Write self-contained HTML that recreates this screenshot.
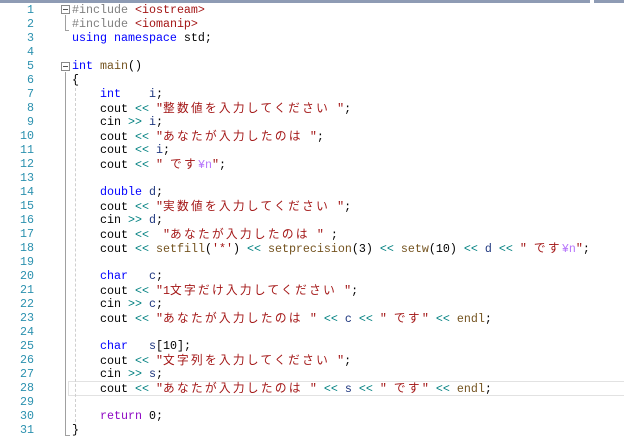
<!DOCTYPE html>
<html><head><meta charset="utf-8">
<style>
html,body{margin:0;padding:0;background:#fff;width:624px;height:440px;overflow:hidden;position:relative}
.top{position:absolute;left:0;top:0;width:590px;height:3px;background:#8e9bb4}
.top2{position:absolute;left:594px;top:0;width:30px;height:3px;background:#8e9bb4}
.ln{position:absolute;left:0;width:34px;height:14px;text-align:right;color:#2b91af;font:11.67px/14px "Liberation Mono",monospace}
.c{position:absolute;white-space:pre;height:14px;font:11.67px/14px "Liberation Mono","Noto Sans CJK JP",monospace;color:#000}
.j{font-family:"Noto Sans CJK JP",sans-serif;font-size:11.67px;line-height:14px;letter-spacing:2.33px}
.k{color:#0000ff}.s{color:#a31515}.p{color:#808080}.o{color:#008080}.f{color:#74531f}.v{color:#1f377f}.r{color:#8f08c4}.e{color:#b776fb}
.box{position:absolute;width:7px;height:7px;border:1px solid #8a8a8a;background:#fff}
.box:after{content:"";position:absolute;left:1px;top:3px;width:5px;height:1px;background:#555}
</style></head><body>
<div class="top"></div><div class="top2"></div>
<div style="position:absolute;left:68px;top:381px;width:556px;height:13px;border:1px solid #e2e2e2;border-right:none"></div>
<div style="position:absolute;left:65px;top:15px;width:1px;height:16px;background:#a0a0a0"></div>
<div style="position:absolute;left:65px;top:30px;width:4px;height:1px;background:#a0a0a0"></div>
<div style="position:absolute;left:65px;top:72px;width:1px;height:364px;background:#a0a0a0"></div>
<div style="position:absolute;left:65px;top:435px;width:5px;height:1px;background:#a0a0a0"></div>
<div style="position:absolute;left:75px;top:88px;width:0;height:334px;border-left:1px dashed #cfcfcf"></div>
<div class="box" style="left:61px;top:5px"></div>
<div class="box" style="left:61px;top:62px"></div>
<div class="ln" style="top:3px">1</div><div class="ln" style="top:17px">2</div><div class="ln" style="top:31px">3</div><div class="ln" style="top:45px">4</div><div class="ln" style="top:59px">5</div><div class="ln" style="top:73px">6</div><div class="ln" style="top:87px">7</div><div class="ln" style="top:101px">8</div><div class="ln" style="top:115px">9</div><div class="ln" style="top:129px">10</div><div class="ln" style="top:143px">11</div><div class="ln" style="top:157px">12</div><div class="ln" style="top:171px">13</div><div class="ln" style="top:185px">14</div><div class="ln" style="top:199px">15</div><div class="ln" style="top:213px">16</div><div class="ln" style="top:227px">17</div><div class="ln" style="top:241px">18</div><div class="ln" style="top:255px">19</div><div class="ln" style="top:269px">20</div><div class="ln" style="top:283px">21</div><div class="ln" style="top:297px">22</div><div class="ln" style="top:311px">23</div><div class="ln" style="top:325px">24</div><div class="ln" style="top:339px">25</div><div class="ln" style="top:353px">26</div><div class="ln" style="top:367px">27</div><div class="ln" style="top:381px">28</div><div class="ln" style="top:395px">29</div><div class="ln" style="top:409px">30</div><div class="ln" style="top:423px">31</div>

<div class="c" style="left:72px;top:3px"><span class="p">#include </span><span class="s">&lt;iostream&gt;</span></div>
<div class="c" style="left:72px;top:17px"><span class="p">#include </span><span class="s">&lt;iomanip&gt;</span></div>
<div class="c" style="left:72px;top:31px"><span class="k">using namespace</span> std;</div>
<div class="c" style="left:72px;top:59px"><span class="k">int</span> <span class="f">main</span>()</div>
<div class="c" style="left:72px;top:73px">{</div>
<div class="c" style="left:100px;top:87px"><span class="k">int</span>    <span class="v">i</span>;</div>
<div class="c" style="left:100px;top:101px">cout <span class="o">&lt;&lt;</span> <span class="s">"<span class="j">整数値を入力してください</span> "</span>;</div>
<div class="c" style="left:100px;top:115px">cin <span class="o">&gt;&gt;</span> <span class="v">i</span>;</div>
<div class="c" style="left:100px;top:129px">cout <span class="o">&lt;&lt;</span> <span class="s">"<span class="j">あなたが入力したのは</span> "</span>;</div>
<div class="c" style="left:100px;top:143px">cout <span class="o">&lt;&lt;</span> <span class="v">i</span>;</div>
<div class="c" style="left:100px;top:157px">cout <span class="o">&lt;&lt;</span> <span class="s">" <span class="j">です</span></span><span class="e">¥n</span><span class="s">"</span>;</div>
<div class="c" style="left:100px;top:185px"><span class="k">double</span> <span class="v">d</span>;</div>
<div class="c" style="left:100px;top:199px">cout <span class="o">&lt;&lt;</span> <span class="s">"<span class="j">実数値を入力してください</span> "</span>;</div>
<div class="c" style="left:100px;top:213px">cin <span class="o">&gt;&gt;</span> <span class="v">d</span>;</div>
<div class="c" style="left:100px;top:227px">cout <span class="o">&lt;&lt;</span>  <span class="s">"<span class="j">あなたが入力したのは</span> "</span> ;</div>
<div class="c" style="left:100px;top:241px">cout <span class="o">&lt;&lt;</span> <span class="f">setfill</span>(<span class="s">'*'</span>) <span class="o">&lt;&lt;</span> <span class="f">setprecision</span>(3) <span class="o">&lt;&lt;</span> <span class="f">setw</span>(10) <span class="o">&lt;&lt;</span> <span class="v">d</span> <span class="o">&lt;&lt;</span> <span class="s">" <span class="j">です</span></span><span class="e">¥n</span><span class="s">"</span>;</div>
<div class="c" style="left:100px;top:269px"><span class="k">char</span>   <span class="v">c</span>;</div>
<div class="c" style="left:100px;top:283px">cout <span class="o">&lt;&lt;</span> <span class="s">"1<span class="j">文字だけ入力してください</span> "</span>;</div>
<div class="c" style="left:100px;top:297px">cin <span class="o">&gt;&gt;</span> <span class="v">c</span>;</div>
<div class="c" style="left:100px;top:311px">cout <span class="o">&lt;&lt;</span> <span class="s">"<span class="j">あなたが入力したのは</span> "</span> <span class="o">&lt;&lt;</span> <span class="v">c</span> <span class="o">&lt;&lt;</span> <span class="s">" <span class="j">です</span>"</span> <span class="o">&lt;&lt;</span> <span class="f">endl</span>;</div>
<div class="c" style="left:100px;top:339px"><span class="k">char</span>   <span class="v">s</span>[10];</div>
<div class="c" style="left:100px;top:353px">cout <span class="o">&lt;&lt;</span> <span class="s">"<span class="j">文字列を入力してください</span> "</span>;</div>
<div class="c" style="left:100px;top:367px">cin <span class="o">&gt;&gt;</span> <span class="v">s</span>;</div>
<div class="c" style="left:100px;top:381px">cout <span class="o">&lt;&lt;</span> <span class="s">"<span class="j">あなたが入力したのは</span> "</span> <span class="o">&lt;&lt;</span> <span class="v">s</span> <span class="o">&lt;&lt;</span> <span class="s">" <span class="j">です</span>"</span> <span class="o">&lt;&lt;</span> <span class="f">endl</span>;</div>
<div class="c" style="left:100px;top:409px"><span class="r">return</span> 0;</div>
<div class="c" style="left:72px;top:423px">}</div>
</body></html>
